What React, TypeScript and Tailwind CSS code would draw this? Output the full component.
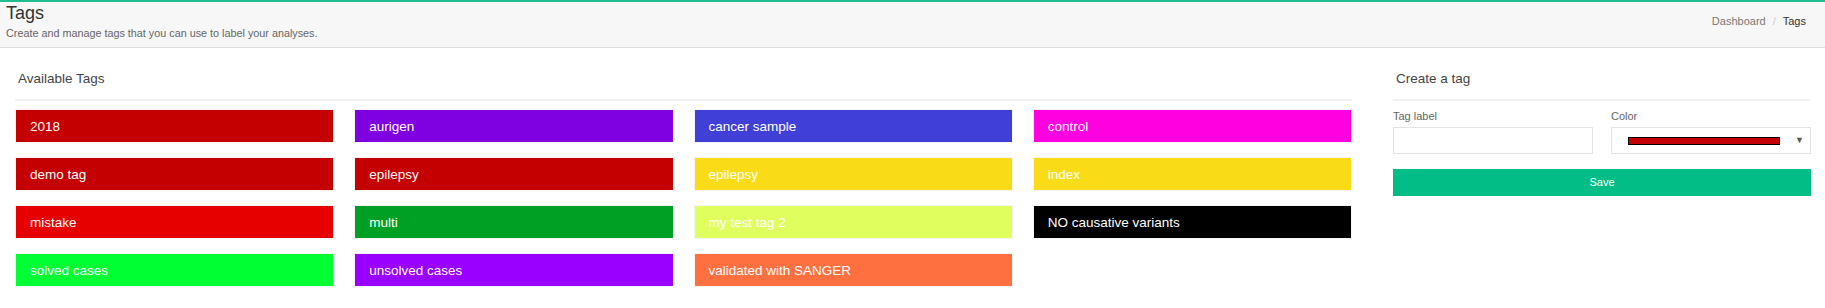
import React from 'react';

type Tag = { label: string; color: string };

const tags: Tag[] = [
  { label: '2018', color: '#c40000' },
  { label: 'aurigen', color: '#7f00e0' },
  { label: 'cancer sample', color: '#4040d9' },
  { label: 'control', color: '#ff00e0' },
  { label: 'demo tag', color: '#c40000' },
  { label: 'epilepsy', color: '#c40000' },
  { label: 'epilepsy', color: '#fadb17' },
  { label: 'index', color: '#fadb17' },
  { label: 'mistake', color: '#e60000' },
  { label: 'multi', color: '#00a025' },
  { label: 'my test tag 2', color: '#e0ff5f' },
  { label: 'NO causative variants', color: '#000000' },
  { label: 'solved cases', color: '#00ff33' },
  { label: 'unsolved cases', color: '#9900ff' },
  { label: 'validated with SANGER', color: '#ff7040' },
];

const TagBox: React.FC<{ tag: Tag }> = ({ tag }) => (
  <div
    className="flex h-[34px] items-center border border-[#f4f4f4] pl-[14px] pt-[3px] text-[13.5px] text-white"
    style={{ backgroundColor: tag.color }}
  >
    {tag.label}
  </div>
);

export default function App() {
  return (
    <div className="h-[308px] w-[1825px] bg-white font-['Liberation_Sans',Arial,sans-serif] text-[#333]">
      <header className="flex h-[48px] items-start justify-between border-t-2 border-b border-t-[#1fbf8f] border-b-[#dddddd] bg-[#f7f7f7] pl-[6px] pr-[19px]">
        <div className="pt-[1px]">
          <h1 className="text-[18px] leading-[20px] text-[#333]">Tags</h1>
          <p className="mt-[3px] text-[10.8px] leading-[14px] text-[#666]">
            Create and manage tags that you can use to label your analyses.
          </p>
        </div>
        <nav className="mt-[12px] flex items-center gap-[7px] text-[11px] leading-[14px]">
          <span className="text-[#777]">Dashboard</span>
          <span className="text-[#ccc]">/</span>
          <span className="text-[#333]">Tags</span>
        </nav>
      </header>

      <main className="flex gap-[41px] pl-[15px] pr-[14px]">
        <section className="flex-1">
          <h2 className="mt-[21px] pl-[3px] text-[13.5px] leading-[20px] text-[#444]">Available Tags</h2>
          <div className="mt-[10px] h-[2px] bg-[#f2f2f2]" />
          <div className="mt-[8px] grid grid-cols-4 gap-x-[20px] gap-y-[14px]">
            {tags.map((t, i) => (
              <TagBox key={i} tag={t} />
            ))}
          </div>
        </section>

        <section className="w-[418px]">
          <h2 className="mt-[21px] pl-[3px] text-[13.5px] leading-[20px] text-[#444]">Create a tag</h2>
          <div className="mt-[10px] h-[2px] bg-[#f2f2f2]" />
          <div className="mt-[8px] grid grid-cols-2 gap-x-[18px]">
            <div>
              <label className="block text-[11px] leading-[14px] text-[#666]">Tag label</label>
              <input
                type="text"
                className="mt-[4px] block h-[27px] w-full border border-[#e3e3e3] bg-white outline-none"
              />
            </div>
            <div>
              <label className="block text-[11px] leading-[14px] text-[#666]">Color</label>
              <div className="mt-[4px] flex h-[27px] w-full items-center border border-[#e3e3e3] bg-white pl-[16px] pr-[6px]">
                <div className="h-[8px] w-[152px] border border-black bg-[#c40000]" />
                <span className="ml-auto text-[9px] leading-none text-[#555]">▼</span>
              </div>
            </div>
          </div>
          <button className="mt-[15px] h-[27px] w-full bg-[#02bd86] text-[11px] text-white">Save</button>
        </section>
      </main>
    </div>
  );
}
